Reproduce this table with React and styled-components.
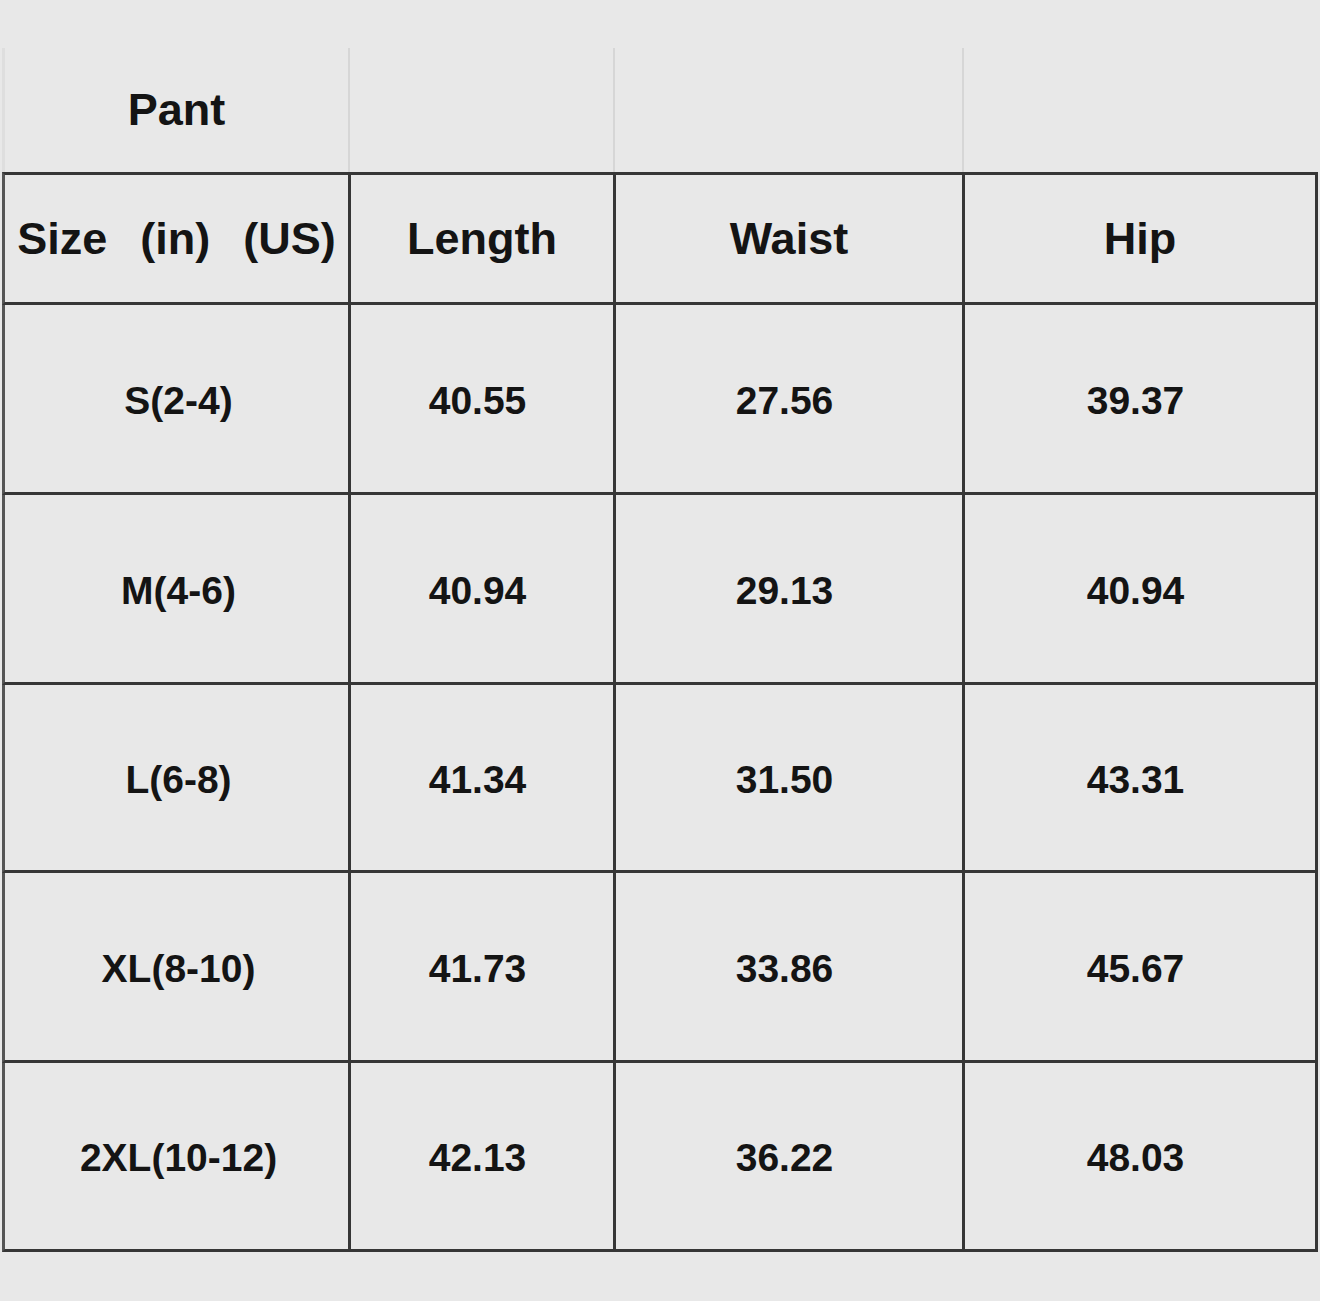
import React from "react";
import styled, { createGlobalStyle } from "styled-components";

const rows = [
  { size: "S(2-4)", length: "40.55", waist: "27.56", hip: "39.37", h: 190 },
  { size: "M(4-6)", length: "40.94", waist: "29.13", hip: "40.94", h: 190 },
  { size: "L(6-8)", length: "41.34", waist: "31.50", hip: "43.31", h: 188 },
  { size: "XL(8-10)", length: "41.73", waist: "33.86", hip: "45.67", h: 190 },
  { size: "2XL(10-12)", length: "42.13", waist: "36.22", hip: "48.03", h: 189 },
];

const GlobalStyle = createGlobalStyle`
  html, body {
    margin: 0;
    padding: 0;
    background: #e8e8e8;
  }
  body {
    font-family: "Liberation Sans", Arial, sans-serif;
    color: #141414;
  }
`;

const Page = styled.div`
  width: 1320px;
  height: 1301px;
  padding: 48px 0 0 2px;
  box-sizing: border-box;
  background: #e8e8e8;
`;

const Chart = styled.div`
  display: grid;
  grid-template-columns: 349px 265px 349px 353px;
`;

const TitleCell = styled.div`
  height: 124px;
  display: flex;
  align-items: center;
  justify-content: center;
  box-sizing: border-box;
  font-size: 45px;
  font-weight: 700;
  border-left: ${(p) => (p.$first ? "3px solid #dedede" : "none")};
  border-right: ${(p) => (p.$last ? "none" : "2px solid #d6d6d6")};
  margin-right: ${(p) => (p.$last ? "0" : "1px")};
`;

const Cell = styled.div`
  height: ${(p) => p.$h}px;
  display: flex;
  align-items: center;
  justify-content: center;
  box-sizing: border-box;
  font-weight: 700;
  font-size: ${(p) => (p.$head ? 45 : 39)}px;
  white-space: pre;
  word-spacing: ${(p) => (p.$head ? "4px" : "0")};
  padding-top: ${(p) => (p.$head ? 0 : 4)}px;
  padding-left: ${(p) => (p.$first && !p.$head ? 4 : 0)}px;
  padding-right: ${(p) => (!p.$first && !p.$head ? 9 : 0)}px;
  border-right: 3px solid #363636;
  border-bottom: 3px solid #363636;
  border-top: ${(p) => (p.$head ? "3px solid #363636" : "none")};
  border-left: ${(p) => (p.$first ? "3px solid #555" : "none")};
`;

export default function App() {
  return (
    <Page>
      <GlobalStyle />
      <Chart>
        <TitleCell $first>Pant</TitleCell>
        <TitleCell />
        <TitleCell />
        <TitleCell $last />

        <Cell $head $first $h={133}>Size  (in)  (US)</Cell>
        <Cell $head $h={133}>Length</Cell>
        <Cell $head $h={133}>Waist</Cell>
        <Cell $head $h={133}>Hip</Cell>

        {rows.map((r) => (
          <React.Fragment key={r.size}>
            <Cell $first $h={r.h}>{r.size}</Cell>
            <Cell $h={r.h}>{r.length}</Cell>
            <Cell $h={r.h}>{r.waist}</Cell>
            <Cell $h={r.h}>{r.hip}</Cell>
          </React.Fragment>
        ))}
      </Chart>
    </Page>
  );
}
